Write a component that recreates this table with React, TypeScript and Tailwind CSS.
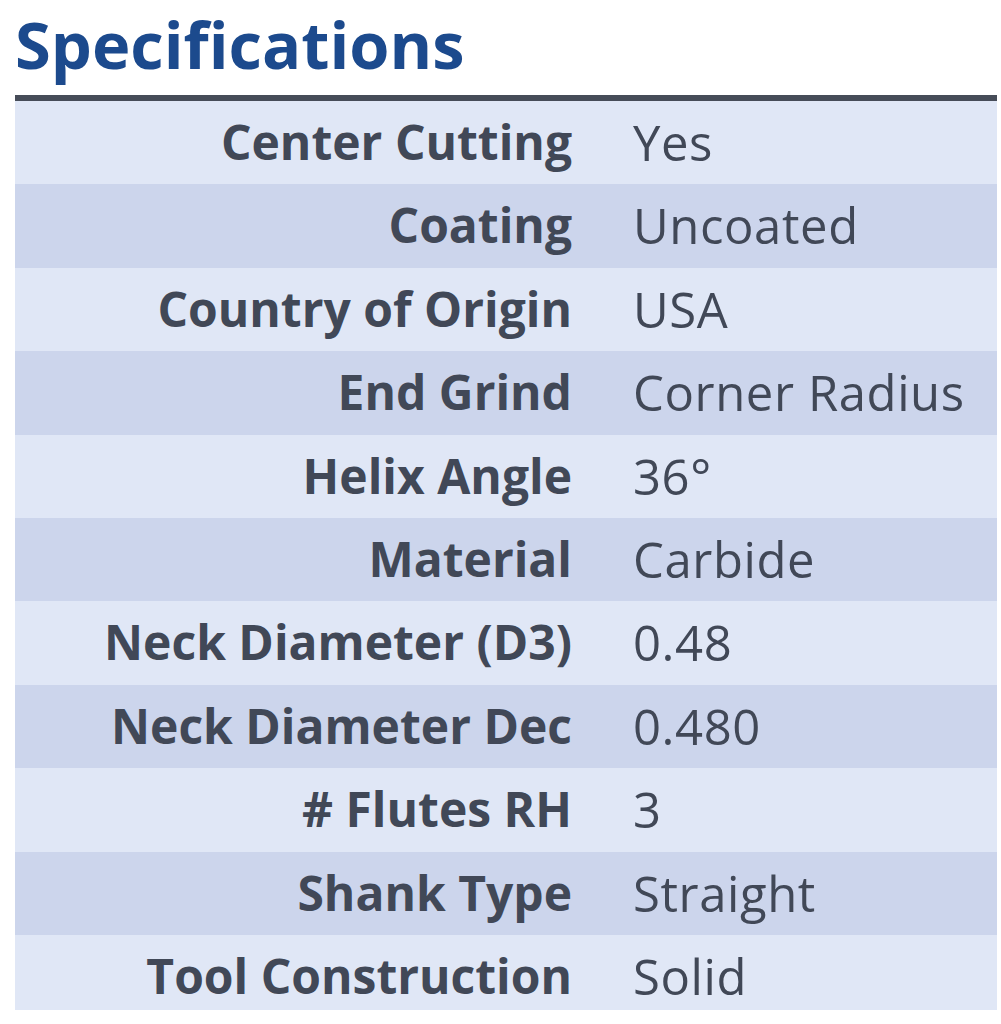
const specs: [string, string][] = [
  ['Center Cutting', 'Yes'],
  ['Coating', 'Uncoated'],
  ['Country of Origin', 'USA'],
  ['End Grind', 'Corner Radius'],
  ['Helix Angle', '36°'],
  ['Material', 'Carbide'],
  ['Neck Diameter (D3)', '0.48'],
  ['Neck Diameter Dec', '0.480'],
  ['# Flutes RH', '3'],
  ['Shank Type', 'Straight'],
  ['Tool Construction', 'Solid'],
];

export default function App() {
  return (
    <div className="w-[1001px] h-[1024px] bg-white font-['Open_Sans',sans-serif] [font-variant-ligatures:none] text-[#414857] overflow-hidden">
      <div className="ml-[15px] w-[982px]">
        <h2 className="h-[95px] text-[65px] leading-[89px] font-bold text-[#1c4a8d]">
          Specifications
        </h2>
        <div className="border-t-[6px] border-[#464c58]">
          {specs.map(([label, value], i) => (
            <div
              key={label}
              className={
                'grid grid-cols-[588px_1fr] items-start pt-[17px] ' +
                (i % 2 === 0 ? 'bg-[#e0e7f6] ' : 'bg-[#ccd5ec] ') +
                (i === specs.length - 1 ? 'h-[75px]' : 'h-[83.4px]')
              }
            >
              <div className="text-right pr-[31px] text-[48px] font-bold leading-none">{label}</div>
              <div className="pl-[30px] text-[49px] leading-none tracking-[0.6px]">{value}</div>
            </div>
          ))}
        </div>
      </div>
    </div>
  );
}
